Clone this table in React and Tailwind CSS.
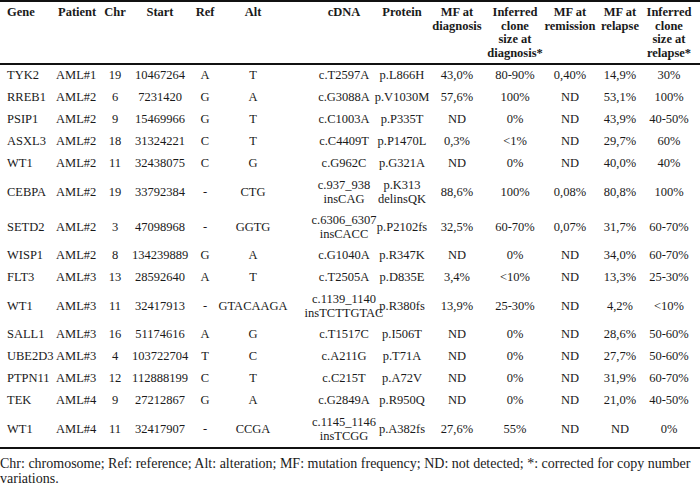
import React from "react";

const rows = [
  ["TYK2", "AML#1", "19", "10467264", "A", "T", ["c.T2597A"], ["p.L866H"], "43,0%", "80-90%", "0,40%", "14,9%", "30%"],
  ["RREB1", "AML#2", "6", "7231420", "G", "A", ["c.G3088A"], ["p.V1030M"], "57,6%", "100%", "ND", "53,1%", "100%"],
  ["PSIP1", "AML#2", "9", "15469966", "G", "T", ["c.C1003A"], ["p.P335T"], "ND", "0%", "ND", "43,9%", "40-50%"],
  ["ASXL3", "AML#2", "18", "31324221", "C", "T", ["c.C4409T"], ["p.P1470L"], "0,3%", "<1%", "ND", "29,7%", "60%"],
  ["WT1", "AML#2", "11", "32438075", "C", "G", ["c.G962C"], ["p.G321A"], "ND", "0%", "ND", "40,0%", "40%"],
  ["CEBPA", "AML#2", "19", "33792384", "-", "CTG", ["c.937_938", "insCAG"], ["p.K313", "delinsQK"], "88,6%", "100%", "0,08%", "80,8%", "100%"],
  ["SETD2", "AML#2", "3", "47098968", "-", "GGTG", ["c.6306_6307", "insCACC"], ["p.P2102fs"], "32,5%", "60-70%", "0,07%", "31,7%", "60-70%"],
  ["WISP1", "AML#2", "8", "134239889", "G", "A", ["c.G1040A"], ["p.R347K"], "ND", "0%", "ND", "34,0%", "60-70%"],
  ["FLT3", "AML#3", "13", "28592640", "A", "T", ["c.T2505A"], ["p.D835E"], "3,4%", "<10%", "ND", "13,3%", "25-30%"],
  ["WT1", "AML#3", "11", "32417913", "-", "GTACAAGA", ["c.1139_1140", "insTCTTGTAC"], ["p.R380fs"], "13,9%", "25-30%", "ND", "4,2%", "<10%"],
  ["SALL1", "AML#3", "16", "51174616", "A", "G", ["c.T1517C"], ["p.I506T"], "ND", "0%", "ND", "28,6%", "50-60%"],
  ["UBE2D3", "AML#3", "4", "103722704", "T", "C", ["c.A211G"], ["p.T71A"], "ND", "0%", "ND", "27,7%", "50-60%"],
  ["PTPN11", "AML#3", "12", "112888199", "C", "T", ["c.C215T"], ["p.A72V"], "ND", "0%", "ND", "31,9%", "60-70%"],
  ["TEK", "AML#4", "9", "27212867", "G", "A", ["c.G2849A"], ["p.R950Q"], "ND", "0%", "ND", "21,0%", "40-50%"],
  ["WT1", "AML#4", "11", "32417907", "-", "CCGA", ["c.1145_1146", "insTCGG"], ["p.A382fs"], "27,6%", "55%", "ND", "ND", "0%"],
];

const grid =
  "grid grid-cols-[54px_46px_30px_60px_30px_66px_20px_76px_40px_70px_46px_64px_36px_62px]";

function Lines({ lines }) {
  return (
    <div className="whitespace-nowrap text-center">
      {lines.map((l, i) => (
        <div key={i}>{l}</div>
      ))}
    </div>
  );
}

function C({ children }) {
  return <div className="flex justify-center">{children}</div>;
}

const headers = [
  ["Chr"],
  ["Start"],
  ["Ref"],
  ["Alt"],
  null,
  ["cDNA"],
  ["Protein"],
  ["MF at", "diagnosis"],
  ["Inferred", "clone", "size at", "diagnosis*"],
  ["MF at", "remission"],
  ["MF at", "relapse"],
  ["Inferred", "clone", "size at", "relapse*"],
];

export default function App() {
  return (
    <div className="w-[700px] h-[493px] bg-white overflow-hidden text-[#1a1a1a] [font-family:'Liberation_Serif',serif] text-[12.5px] leading-[13.5px]">
      <div className="border-t-2 border-b-2 border-[#111]">
        <div className={`${grid} items-start pt-[4px] pb-[3px] font-bold`}>
          <div className="pl-[7px]">Gene</div>
          <div className="pl-[4px] whitespace-nowrap">Patient</div>
          {headers.map((h, i) =>
            h ? (
              <C key={i}>
                <Lines lines={h} />
              </C>
            ) : (
              <div key={i} />
            )
          )}
        </div>
      </div>
      <div className="border-b-2 border-[#111]">
        {rows.map((r, i) => {
          const dbl = r[6].length > 1 || r[7].length > 1;
          return (
            <div
              key={i}
              className={`${grid} items-center ${dbl ? "h-[35px]" : "h-[22px]"}`}
            >
              <div className="pl-[7px] whitespace-nowrap">{r[0]}</div>
              <div className="pl-[2px] whitespace-nowrap">{r[1]}</div>
              <C><Lines lines={[r[2]]} /></C>
              <C><Lines lines={[r[3]]} /></C>
              <C><Lines lines={[r[4]]} /></C>
              <C><Lines lines={[r[5]]} /></C>
              <div />
              <C><Lines lines={r[6]} /></C>
              <C><Lines lines={r[7]} /></C>
              <C><Lines lines={[r[8]]} /></C>
              <C><Lines lines={[r[9]]} /></C>
              <C><Lines lines={[r[10]]} /></C>
              <C><Lines lines={[r[11]]} /></C>
              <C><Lines lines={[r[12]]} /></C>
            </div>
          );
        })}
      </div>
      <p className="pt-[7px] text-[14px] leading-[15px]">
        Chr: chromosome; Ref: reference; Alt: alteration; MF: mutation frequency; ND: not detected; *: corrected for copy number variations.
      </p>
    </div>
  );
}
